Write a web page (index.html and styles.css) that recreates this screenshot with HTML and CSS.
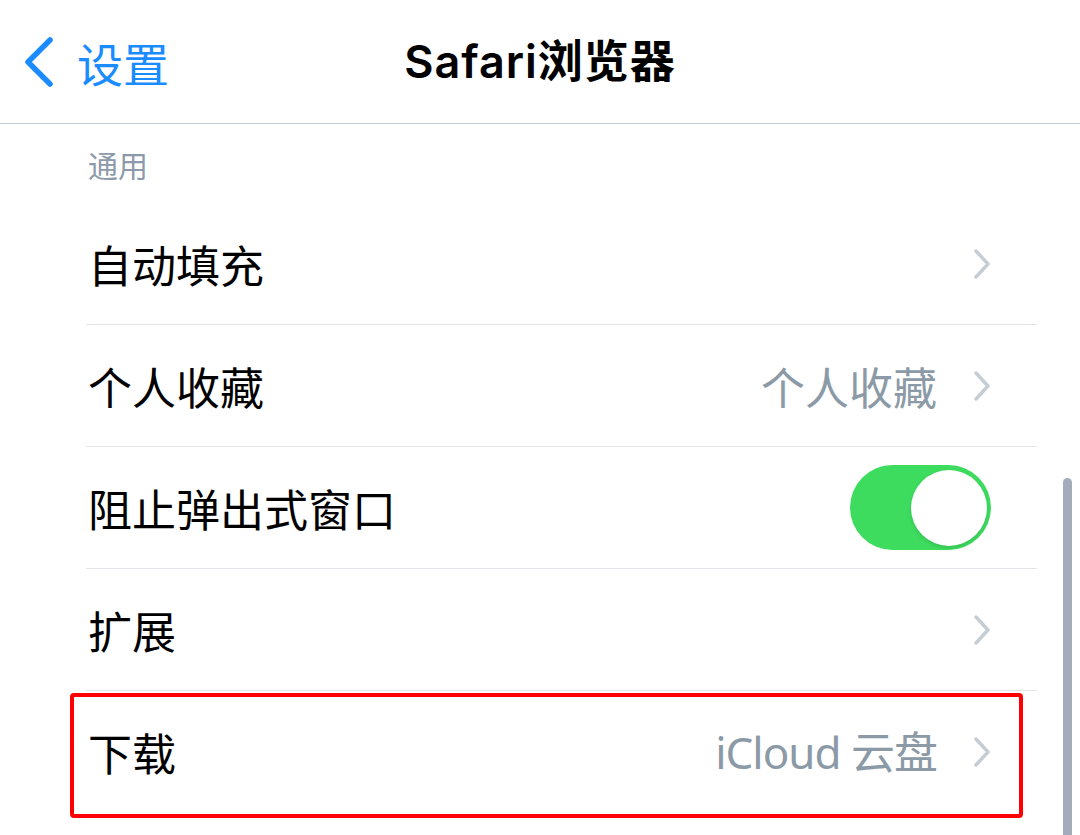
FILE: index.html
```html
<!DOCTYPE html>
<html lang="zh-CN">
<head>
  <meta charset="UTF-8" />
  <meta name="viewport" content="width=device-width, initial-scale=1.0" />
  <title>Safari浏览器</title>
  <link rel="stylesheet" href="styles.css">
</head>
<body>
  <div class="nav">
    <a class="back" href="#">
      <svg class="back-icon" width="36" height="52" viewBox="0 0 36 52">
        <path d="M30 4 L8 26 L30 48" fill="none" stroke="#1a8cff" stroke-width="5.5" stroke-linecap="round" stroke-linejoin="round"/>
      </svg>
      <span>设置</span>
    </a>
    <h1 class="title">Safari浏览器</h1>
    <div></div>
  </div>

  <div class="section-title">通用</div>

  <div class="list">
    <div class="row">
      <span class="label">自动填充</span>
      <span class="chevron"></span>
    </div>
    <div class="row">
      <span class="label">个人收藏</span>
      <span class="value">个人收藏</span>
      <span class="chevron"></span>
    </div>
    <div class="row">
      <span class="label">阻止弹出式窗口</span>
      <span class="toggle"><span class="knob"></span></span>
    </div>
    <div class="row">
      <span class="label">扩展</span>
      <span class="chevron"></span>
    </div>
    <div class="row last">
      <span class="label">下载</span>
      <span class="value">iCloud 云盘</span>
      <span class="chevron"></span>
      <div class="highlight"></div>
    </div>
  </div>

  <div class="scrollbar"></div>
</body>
</html>
```

FILE: styles.css
```css
body {
  margin: 0;
  width: 1080px;
  height: 835px;
  overflow: hidden;
  background: #fff;
  font-family: "Noto Sans CJK SC", "Noto Sans", sans-serif;
  color: #000;
  position: relative;
}
.nav {
  height: 123px;
  border-bottom: 1px solid #c5cbd3;
  display: grid;
  grid-template-columns: 1fr auto 1fr;
  align-items: center;
}
.back {
  display: flex;
  align-items: center;
  gap: 21px;
  padding-left: 20px;
  color: #1a8cff;
  text-decoration: none;
  font-size: 46px;
  line-height: 1;
}
.back-icon {
  display: block;
}
.title {
  margin: 0;
  font-family: "Inter", "Noto Sans CJK SC", sans-serif;
  font-weight: 600;
  font-size: 45px;
  letter-spacing: 1px;
  line-height: 1;
}
.section-title {
  height: 79px;
  box-sizing: border-box;
  padding: 25px 0 0 88px;
  font-size: 30px;
  line-height: 30px;
  color: #8d9aab;
}
.list {
  margin: 0 43px 0 86px;
}
.row {
  position: relative;
  height: 121px;
  border-bottom: 1px solid #e2e6eb;
  display: flex;
  align-items: center;
  padding: 0 46px 0 2px;
  font-size: 44px;
  line-height: 1;
}
.row.last {
  border-bottom: none;
}
.label {
  flex: 1;
}
.value {
  color: #8b9aa6;
  margin-right: 36px;
}
.row.last .value {
  font-family: "Noto Sans", "Noto Sans CJK SC", sans-serif;
  letter-spacing: -1px;
}
.chevron {
  width: 18px;
  height: 32px;
  background: no-repeat center / 18px 32px
    url("data:image/svg+xml;utf8,<svg xmlns='http://www.w3.org/2000/svg' width='18' height='32' viewBox='0 0 18 32'><path d='M3 3 L15 16 L3 29' fill='none' stroke='%23c7cdd5' stroke-width='3.5' stroke-linecap='round' stroke-linejoin='round'/></svg>");
}
.toggle {
  width: 141px;
  height: 85px;
  border-radius: 43px;
  background: #3ddc5f;
  display: flex;
  align-items: center;
  justify-content: flex-end;
  padding-right: 4px;
  box-sizing: border-box;
}
.knob {
  width: 76px;
  height: 76px;
  border-radius: 50%;
  background: #fff;
  box-shadow: 0 2px 4px rgba(0, 0, 0, 0.12);
}
.highlight {
  position: absolute;
  left: -16px;
  right: 14px;
  top: 2px;
  height: 125px;
  border: 4px solid #ff0000;
  border-radius: 4px;
  box-sizing: border-box;
}
.scrollbar {
  position: absolute;
  right: 8px;
  top: 478px;
  bottom: -10px;
  width: 9px;
  border-radius: 5px;
  background: #a2acbb;
}
```
